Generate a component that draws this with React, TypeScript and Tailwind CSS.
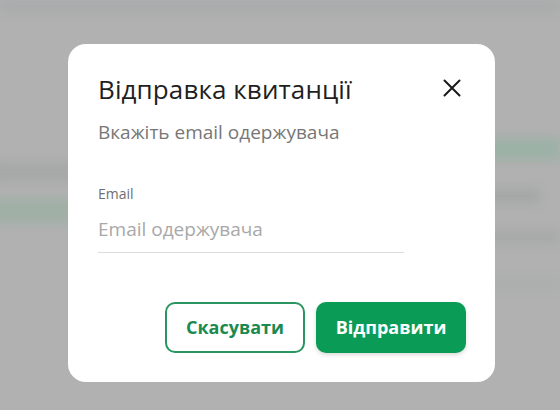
import React from 'react';

const font = { fontFamily: '"Open Sans", "Noto Sans", sans-serif' };

function CloseIcon() {
  return (
    <svg width="20" height="20" viewBox="0 0 20 20" fill="none">
      <path d="M2.5 2.5L17.5 17.5M17.5 2.5L2.5 17.5" stroke="#1a1a1a" strokeWidth="2" strokeLinecap="round" />
    </svg>
  );
}

export default function App() {
  return (
    <div className="relative w-[560px] h-[410px] overflow-hidden bg-[#b1b1b1]" style={font}>
      {/* blurred page behind the overlay */}
      <div className="flex flex-col blur-[5px]">
        <div className="h-[12px] bg-[#a9aaab]" />
        <div className="flex">
          <div className="w-[280px] flex flex-col pt-[150px]">
            <div className="h-[20px] mx-[-10px] bg-[#a7a8a8]" />
            <div className="h-[16px]" />
            <div className="h-[26px] mx-[-10px] bg-[#a0b0a7]" />
          </div>
          <div className="w-[280px] flex flex-col pt-[126px]">
            <div className="h-[22px] ml-[200px] bg-[#9cb1a6]" />
            <div className="h-[28px]" />
            <div className="h-[16px] ml-[200px] mr-[20px] bg-[#a6a7a7]" />
            <div className="h-[26px]" />
            <div className="h-[14px] ml-[200px] bg-[#a8a9a9]" />
            <div className="h-[34px]" />
            <div className="h-[12px] ml-[200px] bg-[#aaaeac]" />
          </div>
        </div>
      </div>

      {/* dialog */}
      <div className="absolute left-[68px] top-[44px] w-[427px] h-[338px] bg-white rounded-[18px] flex flex-col pl-[30px] pr-[29px] pt-[27px] pb-[29px]">
        <div className="flex items-start justify-between">
          <h2 className="text-[26px] leading-[36px] text-[#1f1f1f] tracking-[0.1px]">Відправка квитанції</h2>
          <button className="mt-[7px] mr-[4px]">
            <CloseIcon />
          </button>
        </div>
        <p className="mt-[12px] text-[19px] leading-[26px] text-[#777]">Вкажіть email одержувача</p>

        <label className="mt-[39px] text-[14px] leading-[20px] text-[#6f6f6f]">Email</label>
        <input
          placeholder="Email одержувача"
          className="mt-[5px] w-[306px] pt-[7px] pb-[10px] text-[19px] leading-[26px] border-b border-[#dcdcdc] outline-none placeholder:text-[#a8a8a8]"
          style={font}
        />

        <div className="mt-auto flex justify-end gap-[11px]">
          <button className="w-[140px] h-[51px] rounded-[10px] border-2 border-[#2a9560] text-[#1b8a50] text-[18px] font-bold" style={font}>
            Скасувати
          </button>
          <button className="w-[150px] h-[51px] rounded-[10px] bg-[#0a9c57] text-white text-[18px] font-bold shadow-[0_2px_4px_rgba(0,0,0,0.15)]" style={font}>
            Відправити
          </button>
        </div>
      </div>
    </div>
  );
}
